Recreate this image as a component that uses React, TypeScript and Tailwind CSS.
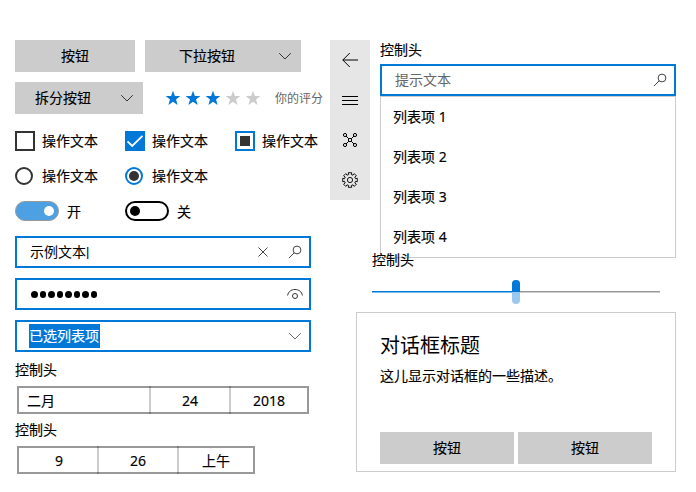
import type { ReactNode } from 'react';

const Chevron = ({ className = '' }: { className?: string }) => (
  <svg className={className} width="14" height="10" viewBox="0 0 14 10" fill="none" stroke="currentColor">
    <path d="M1.200 2.200 7 8l5.800-5.800" />
  </svg>
);

const Search = () => (
  <svg width="14" height="14" viewBox="0 0 14 14" fill="none" stroke="#444">
    <circle cx="9" cy="5" r="3.900" />
    <path d="M6.200 7.800.9 13.100" />
  </svg>
);

const Star = ({ on }: { on: boolean }) => (
  <svg width="16" height="16" viewBox="0 0 16 16" fill={on ? '#0078d7' : '#cccccc'}>
    <path d="M8 .7 9.900 6H15.300L11 9.500 12.600 15 8 11.700 3.400 15 5 9.500.7 6H6.100z" />
  </svg>
);

const Choice = ({ mark, children, className = 'w-[110px]' }: { mark: ReactNode; children: ReactNode; className?: string }) => (
  <div className={`flex items-center ${className}`}>
    <div className="flex w-[27px] shrink-0">{mark}</div>
    <span>{children}</span>
  </div>
);

const Picker = ({ parts }: { parts: { text: string; style: string }[] }) => (
  <div className="ml-[2px] flex h-7 w-fit border-2 border-black/40">
    {parts.map((p, i) => (
      <div key={p.text} className="flex">
        {i > 0 && <div className="-my-[2px] w-[2px] bg-black/20" />}
        <div className={`flex items-center pt-px ${p.style}`}>{p.text}</div>
      </div>
    ))}
  </div>
);

const Nav = () => (
  <nav className="flex h-40 w-10 flex-col bg-[#e6e6e6] text-black">
    <div className="flex h-10 items-center justify-center">
      <svg width="16" height="16" viewBox="0 0 16 16" fill="none" stroke="currentColor">
        <path d="M16 8H.8M7.800 1 .8 8l7 7" />
      </svg>
    </div>
    <div className="flex h-10 items-center justify-center">
      <svg width="16" height="16" viewBox="0 0 16 16" fill="none" stroke="currentColor">
        <path d="M0 4.500h16M0 8.500h16M0 12.500h16" />
      </svg>
    </div>
    <div className="flex h-10 items-center justify-center">
      <svg width="16" height="16" viewBox="0 0 16 16" fill="none" stroke="currentColor">
        <circle cx="3" cy="3" r="1.600" />
        <circle cx="13" cy="3" r="1.600" />
        <circle cx="3" cy="13" r="1.600" />
        <circle cx="13" cy="13" r="1.600" />
        <path d="M6.500 6.500h3v3h-3zM4 4l2.500 2.500M12 4 9.500 6.500M4 12l2.500-2.500M12 12 9.500 9.500" />
      </svg>
    </div>
    <div className="flex h-10 items-center justify-center">
      <svg width="16" height="16" viewBox="0 0 16 16" fill="none" stroke="currentColor" strokeWidth="0.900" strokeLinejoin="round">
        <circle cx="8" cy="8" r="2.600" />
        <path d="M6.700 2.500 6.300.7 9.700.7 9.300 2.500 11 3.200 12.200 1.600 14.400 3.800 12.800 5 13.500 6.700 15.300 6.300 15.300 9.700 13.500 9.300 12.800 11 14.400 12.200 12.200 14.400 11 12.800 9.300 13.500 9.700 15.300 6.300 15.300 6.700 13.500 5 12.800 3.800 14.400 1.600 12.200 3.200 11 2.500 9.300.7 9.700.7 6.300 2.500 6.700 3.200 5 1.600 3.800 3.800 1.600 5 3.200z" />
      </svg>
    </div>
  </nav>
);

export default function App() {
  return (
    <div className="flex h-[492px] w-[696px] overflow-hidden bg-white pt-10 pl-[15px] font-['Noto_Sans','Noto_Sans_CJK_SC',sans-serif] text-sm leading-5 text-black [-webkit-text-stroke:0.150px]">
      <div className="flex w-[315px] shrink-0 flex-col">
        <div className="flex gap-[10px]">
          <button className="h-8 w-[120px] bg-[#ccc]">按钮</button>
          <button className="flex h-8 w-[156px] items-center justify-between bg-[#ccc] pr-[9px] pl-[34px]">
            下拉按钮
            <Chevron className="text-[#333]" />
          </button>
        </div>
        <div className="mt-[10px] flex items-center">
          <button className="flex h-8 w-32 items-center justify-between bg-[#ccc] pr-[9px] pl-5">
            拆分按钮
            <Chevron className="text-[#333]" />
          </button>
          <div className="ml-[22px] flex gap-1">
            {[1, 2, 3, 4, 5].map((n) => (
              <Star key={n} on={n <= 3} />
            ))}
          </div>
          <span className="mt-[2px] ml-[14px] text-xs text-[#666] [-webkit-text-stroke:0]">你的评分</span>
        </div>

        <div className="mt-[17px] flex h-5">
          <Choice mark={<div className="size-5 border-2 border-[#333]" />}>操作文本</Choice>
          <Choice
            mark={
              <div className="flex size-5 items-center justify-center bg-[#0078d7]">
                <svg width="20" height="20" viewBox="0 0 20 20" fill="none" stroke="#fff" strokeWidth="1.800">
                  <path d="m2.500 10.300 4.700 4.700L17.500 4.900" />
                </svg>
              </div>
            }
          >
            操作文本
          </Choice>
          <Choice
            className=""
            mark={
              <div className="flex size-5 items-center justify-center border-2 border-[#0078d7]">
                <div className="size-[10px] bg-[#333]" />
              </div>
            }
          >
            操作文本
          </Choice>
        </div>

        <div className="mt-[15px] flex h-5">
          <Choice mark={<div className="size-[18px] rounded-full border-2 border-[#333]" />}>操作文本</Choice>
          <Choice
            mark={
              <div className="flex size-[18px] items-center justify-center rounded-full border-2 border-[#0078d7]">
                <div className="size-[10px] rounded-full bg-[#333]" />
              </div>
            }
          >
            操作文本
          </Choice>
        </div>

        <div className="mt-[15px] flex h-5 items-center">
          <div className="flex h-5 w-11 items-center justify-end rounded-full border border-[#999] bg-[#4da1e3] pr-1">
            <div className="size-[10px] rounded-full bg-white" />
          </div>
          <span className="mt-[2px] ml-2 w-[58px]">开</span>
          <div className="flex h-5 w-11 items-center rounded-full border-2 border-black pl-[3px]">
            <div className="size-[10px] rounded-full bg-black" />
          </div>
          <span className="mt-[2px] ml-2">关</span>
        </div>

        <div className="mt-[15px] flex h-8 w-[296px] items-center border-2 border-[#0078d7] pr-[7px] pl-[13px] [-webkit-text-stroke:0]">
          <span className="flex flex-1 items-center">
            示例文本<span className="font-['Liberation_Sans',sans-serif] text-[13px]">|</span>
          </span>
          <svg className="mr-5" width="10" height="10" viewBox="0 0 10 10" fill="none" stroke="#444">
            <path d="m.5.5 9 9m0-9-9 9" />
          </svg>
          <Search />
        </div>
        <div className="mt-[10px] flex h-8 w-[296px] items-center justify-between border-2 border-[#0078d7] pr-[6px] pl-[14px]">
          <div className="flex gap-[2px]">
            {[0, 1, 2, 3, 4, 5, 6, 7].map((n) => (
              <i key={n} className="h-[7px] w-[6.500px] rounded-full bg-black" />
            ))}
          </div>
          <svg width="16" height="12" viewBox="0 0 16 12" fill="none" stroke="#333">
            <path d="M.6 7.500C1.300 3.500 4.300 1.500 8 1.500s6.700 2 7.400 6" />
            <circle cx="8" cy="8" r="2.500" />
          </svg>
        </div>
        <div className="mt-[10px] flex h-8 w-[296px] items-center justify-between border-2 border-[#0078d7] pr-[7px] pl-3">
          <span className="flex h-6 w-[71px] items-center bg-[#0078d7] text-white">已选列表项</span>
          <Chevron className="text-[#666]" />
        </div>

        <div className="mt-2 h-5">控制头</div>
        <div className="mt-[6px]">
          <Picker
            parts={[
              { text: '二月', style: 'w-[130px] pl-2' },
              { text: '24', style: 'w-[78px] justify-center' },
              { text: '2018', style: 'w-[76px] justify-center' },
            ]}
          />
        </div>
        <div className="mt-[6px] h-5">控制头</div>
        <div className="mt-[6px]">
          <Picker
            parts={[
              { text: '9', style: 'w-[78px] justify-center pl-[2px]' },
              { text: '26', style: 'w-[78px] justify-center' },
              { text: '上午', style: 'w-[74px] justify-center' },
            ]}
          />
        </div>
      </div>

      <div className="flex w-[346px] shrink-0 flex-col">
        <div className="flex gap-[10px]">
          <Nav />
          <div className="w-[296px]">
            <div className="h-6">控制头</div>
            <div className="flex h-8 items-center justify-between border-2 border-[#0078d7] pr-[7px] pl-[13px] text-[#666] [-webkit-text-stroke:0]">
              提示文本
              <Search />
            </div>
            <ul className="h-[162px] border border-[#ccc]">
              {[1, 2, 3, 4].map((n) => (
                <li key={n} className="flex h-10 items-center pl-3">
                  列表项 {n}
                </li>
              ))}
            </ul>
          </div>
        </div>
        <div className="-mt-2 ml-[42px] h-5">控制头</div>
        <div className="mt-[10px] ml-[42px] flex h-6 w-72 items-center">
          <div className="h-[2px] w-[140px] border-b border-[#80bbeb] bg-[#0078d7]" />
          <div className="h-6 w-2 overflow-hidden rounded-full bg-[#99c9ef]">
            <div className="h-3 bg-[#0078d7]" />
          </div>
          <div className="h-[2px] flex-1 border-b border-[#ccc] bg-[#999]" />
        </div>
        <section className="mt-2 ml-[26px] flex h-40 flex-col border border-[#ccc] px-[23px] pt-5 pb-[7px]">
          <h2 className="text-xl leading-[26px] [-webkit-text-stroke:0]">对话框标题</h2>
          <p className="mt-[7px]">这儿显示对话框的一些描述。</p>
          <div className="mt-auto flex gap-1">
            <button className="h-8 w-[134px] bg-[#ccc]">按钮</button>
            <button className="h-8 w-[134px] bg-[#ccc]">按钮</button>
          </div>
        </section>
      </div>
    </div>
  );
}
